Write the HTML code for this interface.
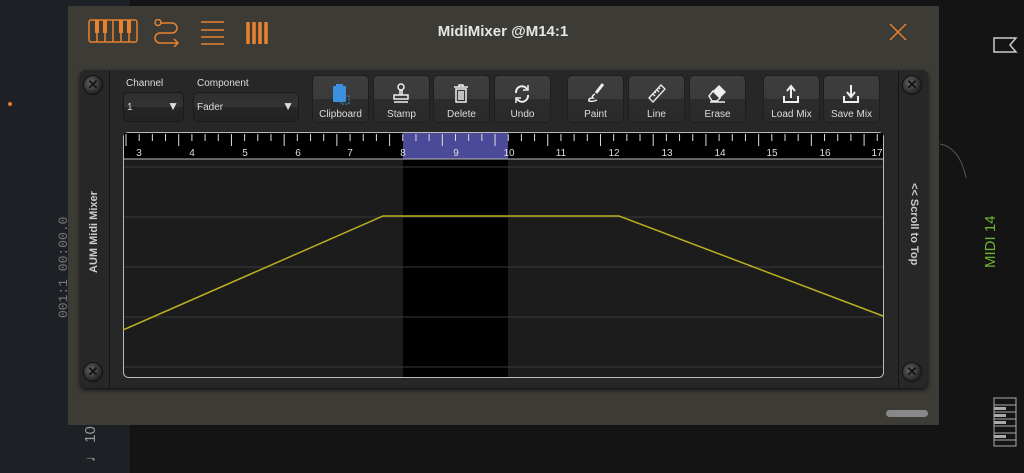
<!DOCTYPE html><html><head><style>
body{margin:0;width:1024px;height:473px;overflow:hidden;background:#151414;font-family:"Liberation Sans",sans-serif;position:relative}
.a{position:absolute}
.btn{position:absolute;top:76px;width:55px;height:46px;border-radius:4px;background:linear-gradient(#3e3e3e 0,#3a3a3a 50%,#2c2c2c 50%,#2a2a2a);box-shadow:0 0 0 1px #1e1e1e;color:#ddd;font-size:10px;text-align:center}
.btn span{position:absolute;left:0;right:0;top:33px}
.btn svg{position:absolute;left:17px;top:6px}
.sel{position:absolute;top:93px;height:28px;border-radius:4px;background:linear-gradient(#2e2e2e 0,#333 50%,#262626 50%,#222);box-shadow:0 0 0 1px #1a1a1a;color:#ddd;font-size:10px}
.screw{position:absolute;width:18px;height:18px;border-radius:50%;background:radial-gradient(circle at 40% 40%,#666,#222 70%);box-shadow:0 0 0 1px #111;color:#111;font-size:13px;line-height:18px;text-align:center;font-weight:bold}
</style></head><body>
<div class="a" style="left:0;top:0;width:130px;height:473px;background:#1d2125"></div>
<div class="a" style="left:130px;top:0;width:1px;height:473px;background:#0e0f10"></div>
<div class="a" style="left:8px;top:102px;width:4px;height:4px;border-radius:2px;background:#e07a2a"></div>
<div class="a" style="color:#777;font-family:'Liberation Mono',monospace;font-size:13px;white-space:nowrap;top:318px;left:56px;transform:rotate(-90deg);transform-origin:0 0">001:1  00:00.0</div>
<div class="a" style="left:82px;top:462px;transform:rotate(-90deg);transform-origin:0 0;color:#999;font-size:15px;white-space:nowrap">♩ 10</div>
<div class="a" style="left:982px;top:268px;transform:rotate(-90deg);transform-origin:0 0;color:#6ab530;font-size:15px;white-space:nowrap">MIDI 14</div>
<svg class="a" style="left:992px;top:35px" width="28" height="20"><path d="M2 3H24L18 10L24 17H2Z" fill="none" stroke="#ccc" stroke-width="1.5"/></svg>
<svg class="a" style="left:940px;top:140px" width="30" height="40"><path d="M0 4Q20 8 26 38" fill="none" stroke="#555"/></svg>
<svg class="a" style="left:993px;top:397px" width="24" height="50"><rect x="1" y="1" width="22" height="48" fill="none" stroke="#aaa"/><g stroke="#aaa"><path d="M1 8H23M1 15H23M1 22H23M1 29H23M1 36H23M1 43H23"/></g><g fill="#aaa"><rect x="1" y="10" width="12" height="3"/><rect x="1" y="17" width="12" height="3"/><rect x="1" y="24" width="12" height="3"/><rect x="1" y="38" width="12" height="3"/></g></svg>

<div class="a" style="left:68px;top:6px;width:871px;height:419px;background:#3d3b36"></div>
<svg class="a" style="left:88px;top:19px" width="190" height="28" fill="none" stroke="#e8822e" stroke-width="1.5">
<rect x="1" y="1" width="48" height="22" rx="2"/><path d="M9 1V23M17 1V23M25 1V23M33 1V23M41 1V23"/><g fill="#e8822e" stroke="none"><rect x="7" y="1" width="4" height="13"/><rect x="15" y="1" width="4" height="13"/><rect x="31" y="1" width="4" height="13"/><rect x="39" y="1" width="4" height="13"/></g>
<circle cx="70" cy="3.5" r="3"/><path d="M73 4H84a5 5 0 0 1 0 10H72a5 5 0 0 0 0 10H90M86 20L90 24L86 28"/>
<path d="M113 3H136M113 11H136M113 18H136M113 25H136" />
<g stroke-width="3.5"><path d="M160 3V25M166 3V25M172 3V25M178 3V25"/></g></svg>
<div class="a" style="left:0;width:1006px;top:23px;text-align:center;color:#e6e6e6;font-size:15px;font-weight:bold">MidiMixer @M14:1</div>
<svg class="a" style="left:888px;top:22px" width="20" height="20"><path d="M2 2L18 18M18 2L2 18" stroke="#e8822e" stroke-width="1.5"/></svg>
<div class="a" style="left:886px;top:410px;width:42px;height:7px;border-radius:4px;background:#888"></div>

<div class="a" style="left:80px;top:70px;width:848px;height:318px;border-radius:6px;background:#272727;box-shadow:0 2px 4px #111"></div>
<div class="a" style="left:109px;top:70px;width:1px;height:318px;background:#151515"></div>
<div class="a" style="left:898px;top:70px;width:1px;height:318px;background:#151515"></div>
<div class="screw" style="left:84px;top:76px">✕</div>
<div class="screw" style="left:84px;top:363px">✕</div>
<div class="screw" style="left:903px;top:76px">✕</div>
<div class="screw" style="left:903px;top:363px">✕</div>
<div class="a" style="left:88px;top:273px;transform:rotate(-90deg);transform-origin:0 0;color:#ccc;font-size:11px;font-weight:bold;white-space:nowrap">AUM Midi Mixer</div>
<div class="a" style="left:920px;top:183px;transform:rotate(90deg);transform-origin:0 0;color:#ccc;font-size:11px;font-weight:bold;white-space:nowrap">&lt;&lt; Scroll to Top</div>

<div class="a" style="left:126px;top:78px;color:#ddd;font-size:10px">Channel</div>
<div class="a" style="left:197px;top:78px;color:#ddd;font-size:10px">Component</div>
<div class="sel" style="left:124px;width:59px"><span class="a" style="left:3px;top:9px">1</span><span class="a" style="right:4px;top:6px;font-size:12px">▼</span></div>
<div class="sel" style="left:194px;width:104px"><span class="a" style="left:3px;top:9px">Fader</span><span class="a" style="right:4px;top:6px;font-size:12px">▼</span></div>

<div class="btn" style="left:313px"><svg width="22" height="24"><rect x="3" y="4" width="13" height="16" rx="1" fill="#3d8fe0"/><rect x="6" y="2" width="7" height="4" fill="#3d8fe0"/><rect x="11" y="14" width="8" height="8" fill="none" stroke="#3d8fe0" stroke-dasharray="2 1.5"/></svg><span>Clipboard</span></div>
<div class="btn" style="left:374px"><svg width="22" height="24" fill="none" stroke="#eee" stroke-width="1.5"><circle cx="10" cy="5" r="3"/><path d="M9 8V13M11 8V13M3 13H17V17H3ZM3 20H17"/></svg><span>Stamp</span></div>
<div class="btn" style="left:434px"><svg width="22" height="24" fill="none" stroke="#eee" stroke-width="1.5"><path d="M3 5H17M8 5V3H12V5M5 7H15V20H5ZM8 9V18M10 9V18M12 9V18"/></svg><span>Delete</span></div>
<div class="btn" style="left:495px"><svg width="22" height="24" fill="none" stroke="#eee" stroke-width="2"><path d="M4 11A6 6 0 0 1 15 7M16 13A6 6 0 0 1 5 17"/><path d="M16 3V8H11M4 21V16H9" stroke-width="1.5"/></svg><span>Undo</span></div>
<div class="btn" style="left:568px"><svg width="22" height="24" fill="none" stroke="#eee" stroke-width="1.5"><path d="M18 2L11 11" stroke-width="3"/><path d="M10 12Q6 14 8 16Q3 16 4 19Q8 20 12 18"/></svg><span>Paint</span></div>
<div class="btn" style="left:629px"><svg width="22" height="24" fill="none" stroke="#eee" stroke-width="1.3"><path d="M3 16L15 3L19 7L7 20Z M7 12L9 14M9 10L10 11M11 8L13 10M13 6L14 7"/></svg><span>Line</span></div>
<div class="btn" style="left:690px"><svg width="22" height="24"><path d="M12 3L19 10L13 16L6 9Z" fill="#eee"/><path d="M6 9L13 16L10 19H5L2 14Z" fill="none" stroke="#eee" stroke-width="1.5"/><path d="M3 20H18" stroke="#eee" stroke-width="1.5"/></svg><span>Erase</span></div>
<div class="btn" style="left:764px"><svg width="22" height="24" fill="none" stroke="#eee" stroke-width="2"><path d="M10 16V5M6 9L10 4L14 9"/><path d="M3 14V20H17V14"/></svg><span>Load Mix</span></div>
<div class="btn" style="left:824px"><svg width="22" height="24" fill="none" stroke="#eee" stroke-width="2"><path d="M10 3V14M6 10L10 15L14 10"/><path d="M3 14V20H17V14"/></svg><span>Save Mix</span></div>

<svg class="a" style="left:123px;top:132px" width="761" height="246">
<rect x="0.5" y="0.5" width="760" height="245" rx="5" fill="#1c1c1c" stroke="#bbb"/>
<rect x="1" y="1" width="759" height="26" fill="#000"/>
<rect x="280" y="1" width="105" height="26" fill="#4a4a98"/>
<rect x="280" y="27" width="105" height="218" fill="#000"/>
<g stroke="#3a3a3a"><path d="M1 35H760M1 85H760M1 135H760M1 185H760M1 235H760"/></g>
<path d="M1 27H760" stroke="#bbb"/>
<g id="t" stroke="#ddd"></g>
<g fill="#ddd" font-size="10" font-family="Liberation Sans" text-anchor="middle">
<text x="16" y="24">3</text><text x="69" y="24">4</text><text x="122" y="24">5</text><text x="175" y="24">6</text><text x="227" y="24">7</text><text x="280" y="24">8</text><text x="333" y="24">9</text><text x="386" y="24">10</text><text x="438" y="24">11</text><text x="491" y="24">12</text><text x="544" y="24">13</text><text x="597" y="24">14</text><text x="649" y="24">15</text><text x="702" y="24">16</text><text x="754" y="24">17</text></g>
<path d="M0 198L260 84H496L760 184" fill="none" stroke="#b8b020" stroke-width="1.5"/>
</svg>
<script>
var g=document.getElementById('t'),s='';
for(var i=0;i<=57;i++){var x=3+i*13.18;var m=i%4==0;s+='<line x1="'+x+'" y1="2" x2="'+x+'" y2="'+(m?14:9)+'" stroke="#ddd"/>';}
g.innerHTML=s;
</script>
</body></html>
